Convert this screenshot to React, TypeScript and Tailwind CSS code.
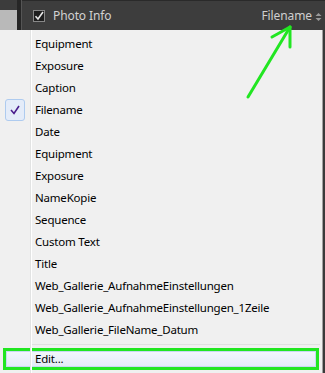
import React from "react";

const items = [
  "Equipment",
  "Exposure",
  "Caption",
  "Filename",
  "Date",
  "Equipment",
  "Exposure",
  "NameKopie",
  "Sequence",
  "Custom Text",
  "Title",
  "Web_Gallerie_AufnahmeEinstellungen",
  "Web_Gallerie_AufnahmeEinstellungen_1Zeile",
  "Web_Gallerie_FileName_Datum",
];

export default function App() {
  return (
    <div
      className="relative w-[325px] h-[373px] overflow-hidden bg-[#3a3a3a]"
      style={{ fontFamily: '"Noto Sans", "Open Sans", sans-serif' }}
    >
      {/* Header */}
      <div className="flex h-[30px]">
        <div className="w-[17px] flex flex-col">
          <div className="h-[10px] bg-[#3c3c3c]" />
          <div className="flex-1 bg-[#b9b9b9]" />
        </div>
        <div className="w-[4px] bg-[#262626]" />
        <div className="w-[1px] bg-[#555]" />
        <div className="flex-1 flex items-center bg-[#3d3d3d] border-t border-[#2a2a2a] pl-[11px] pr-[3px]">
          <div className="w-[12px] h-[12px] bg-[#1e1e1e] border border-[#888] flex items-center justify-center mt-[1px]">
            <svg width="10" height="10" viewBox="0 0 10 10">
              <path d="M1.5 5.2 L4 8 L9 1" stroke="#e8e8e8" strokeWidth="1.6" fill="none" />
            </svg>
          </div>
          <span className="ml-[8px] text-[12px] tracking-[-0.1px] text-[#d2d2d2] mt-[1px]">Photo Info</span>
          <span className="ml-auto text-[12px] tracking-[-0.1px] text-[#cfcfcf] mt-[1px]">Filename</span>
          <svg width="7" height="10" viewBox="0 0 7 10" className="ml-[3px] mt-[2px]">
            <path d="M0.5 4 L3.5 1 L6.5 4 Z" fill="#9a9a9a" />
            <path d="M0.5 6 L3.5 9 L6.5 6 Z" fill="#9a9a9a" />
          </svg>
        </div>
      </div>

      {/* Menu */}
      <div className="relative w-[323px] h-[343px] bg-[#f0f0f0] border-r border-[#a0a0a0] pt-[3px] text-[11.5px] tracking-[-0.2px] text-[#000]">
        <div className="absolute left-[30px] top-0 bottom-0 w-[1px] bg-[#e2e3e3]" />
        <div className="absolute left-[31px] top-0 bottom-0 w-[1px] bg-[#ffffff]" />
        {items.map((t, i) => (
          <div key={i} className="relative flex items-center h-[22px]">
            <div className="w-[35px] h-full flex items-center justify-center">
              {t === "Filename" && (
                <div className="ml-[-5px] w-[20px] h-[22px] rounded-[3px] border border-[#aecbef] bg-[#e4ecf9] flex items-center justify-center">
                  <svg width="10" height="10" viewBox="0 0 10 10">
                    <path d="M1 5 L4 8.5 L9 1" stroke="#4a1c8c" strokeWidth="1.6" fill="none" />
                  </svg>
                </div>
              )}
            </div>
            <span className="leading-none">{t}</span>
          </div>
        ))}
        <div className="relative h-[7px] flex items-center">
          <div className="ml-[32px] mr-[2px] w-full h-[1px] bg-[#e0e0e0]" />
        </div>
        <div className="mx-[3px] h-[22px] border-[3px] border-[#21e621] flex">
          <div className="flex-1 flex items-center bg-gradient-to-b from-[#f2f6fc] to-[#e3ebf7] border border-[#c6d9f1]">
            <span className="ml-[28px] leading-none">Edit...</span>
          </div>
        </div>
      </div>

      {/* Annotation arrow */}
      <svg className="absolute left-0 top-0 pointer-events-none" width="325" height="373">
        <g stroke="#22e622" strokeWidth="3" strokeLinecap="round" fill="none">
          <path d="M248 97 L290 27" />
          <path d="M290 27 L272 37" />
          <path d="M290 27 L290 47" />
        </g>
      </svg>
    </div>
  );
}
